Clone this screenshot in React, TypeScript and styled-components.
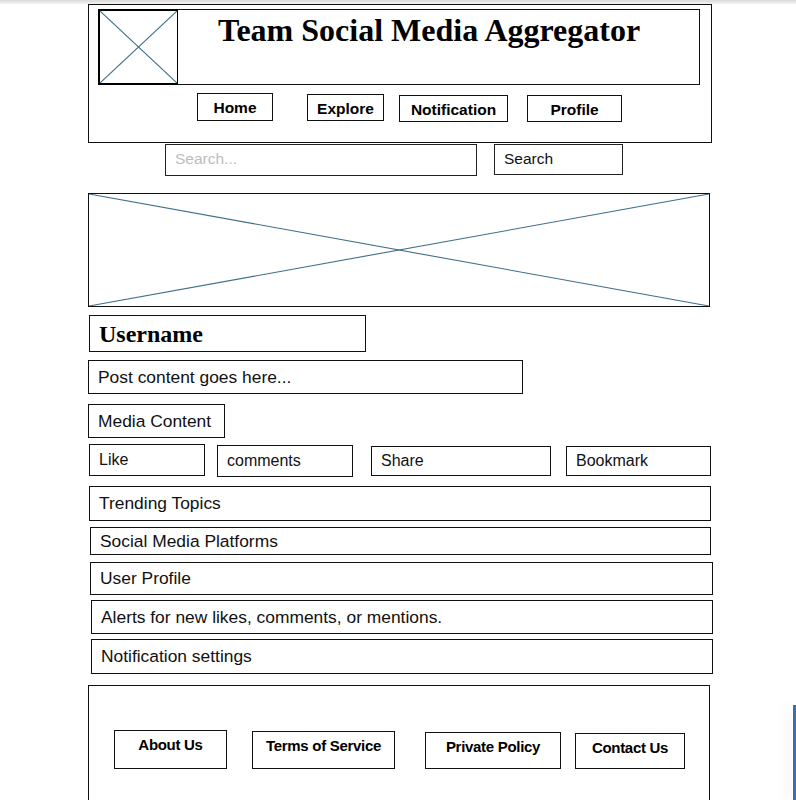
import React from "react";
import styled, { createGlobalStyle } from "styled-components";

const GlobalStyle = createGlobalStyle`
	* {
		box-sizing: border-box;
	}
	body {
		margin: 0;
		background: #fff;
		font-family: "Liberation Sans", Arial, sans-serif;
		color: #111;
	}
`;

const TopShade = styled.div`
	height: 4px;
	background: linear-gradient(#d9d9d9, #f4f4f4);
`;

const Page = styled.div`
	padding-left: 88px;
	width: 796px;
	overflow: hidden;
	height: 796px;
`;

//header
const Header = styled.header`
	width: 624px;
	height: 139px;
	border: 1px solid #111;
	padding: 4px 0 0 9px;
`;
const TitleBox = styled.div`
	display: flex;
	width: 602px;
	height: 76px;
	border: 1px solid #111;
`;
const Placeholder = styled.div`
	flex: 0 0 80px;
	height: 76px;
	margin: -1px 0 -1px -1px;
	border: 2px solid #000;
	border-right-width: 1px;
	background: #fff;
`;
const Title = styled.h1`
	margin: 0;
	padding: 1px 0 0 40px;
	font-family: "Liberation Serif", "Times New Roman", serif;
	font-size: 32px;
	font-weight: bold;
	line-height: 38px;
	color: #000;
`;
const NavRow = styled.nav`
	display: flex;
	align-items: flex-start;
	margin-top: 8px;
`;
const NavButton = styled.div<{ $w: number; $left: number; $top: number; $h: number }>`
	width: ${(p) => p.$w}px;
	height: ${(p) => p.$h}px;
	margin-left: ${(p) => p.$left}px;
	margin-top: ${(p) => p.$top}px;
	border: 1px solid #111;
	display: flex;
	align-items: center;
	justify-content: center;
	padding-top: 2px;
	font-size: 15.5px;
	font-weight: bold;
	color: #000;
`;

//search
const SearchRow = styled.div`
	display: flex;
	align-items: flex-start;
	margin-top: 1px;
`;
const SearchInput = styled.input`
	width: 312px;
	height: 32px;
	margin-left: 77px;
	border: 1px solid #222;
	padding: 0 9px 2px;
	font-family: "Liberation Sans", Arial, sans-serif;
	font-size: 15.5px;
	outline: none;
	&::placeholder {
		color: #bdbdbd;
	}
`;
const SearchButton = styled.div`
	width: 129px;
	height: 31px;
	margin-left: 17px;
	border: 1px solid #222;
	padding: 0 0 2px 9px;
	display: flex;
	align-items: center;
	font-size: 15.5px;
`;

//banner image
const Banner = styled.div`
	width: 622px;
	height: 114px;
	margin-top: 17px;
	border: 1px solid #111;
	svg {
		display: block;
	}
`;

//post
const Box = styled.div<{ $w: number; $h: number; $top: number; $left?: number }>`
	width: ${(p) => p.$w}px;
	height: ${(p) => p.$h}px;
	margin-top: ${(p) => p.$top}px;
	margin-left: ${(p) => p.$left || 0}px;
	border: 1px solid #111;
	padding-left: 9px;
	display: flex;
	align-items: center;
	font-size: 17.4px;
	color: #111;
`;
const UserName = styled(Box)`
	font-family: "Liberation Serif", "Times New Roman", serif;
	font-size: 24px;
	font-weight: bold;
	color: #000;
	padding-top: 2px;
`;
const ActionRow = styled.div`
	display: flex;
	align-items: flex-start;
`;
const ActionBox = styled(Box)`
	font-size: 16px;
`;

//footer
const Footer = styled.footer`
	width: 622px;
	height: 130px;
	margin-top: 11px;
	border: 1px solid #111;
	display: flex;
	align-items: flex-end;
	padding: 0 0 0 25px;
`;
const FooterLinks = styled.div`
	display: flex;
	align-items: flex-end;
	height: 83px;
	margin-bottom: auto;
`;
const FooterButton = styled.div<{ $w: number; $h: number; $left: number }>`
	width: ${(p) => p.$w}px;
	height: ${(p) => p.$h}px;
	margin-left: ${(p) => p.$left}px;
	border: 1px solid #111;
	padding-top: 5px;
	text-align: center;
	font-size: 15px;
	font-weight: bold;
	letter-spacing: -0.3px;
	color: #000;
`;

const EdgePanel = styled.div`
	position: absolute;
	right: 0;
	top: 705px;
	width: 3px;
	height: 95px;
	background: #3b6fa6;
	box-shadow: -6px 0 12px rgba(0, 0, 0, 0.08);
`;

function Cross({ w, h }: { w: number; h: number }) {
	return (
		<svg width={w} height={h} viewBox={`0 0 ${w} ${h}`}>
			<line x1="0" y1="0" x2={w} y2={h} stroke="#3f6f8a" strokeWidth="1.1" />
			<line x1="0" y1={h} x2={w} y2="0" stroke="#3f6f8a" strokeWidth="1.1" />
		</svg>
	);
}

const navItems = [
	{ label: "Home", w: 76, h: 28, left: 99, top: 0 },
	{ label: "Explore", w: 77, h: 27, left: 34, top: 1 },
	{ label: "Notification", w: 109, h: 27, left: 15, top: 2 },
	{ label: "Profile", w: 95, h: 27, left: 19, top: 2 },
];

const actions = [
	{ label: "Like", w: 116, h: 32, left: 1, top: 0 },
	{ label: "comments", w: 136, h: 32, left: 12, top: 1 },
	{ label: "Share", w: 180, h: 30, left: 18, top: 2 },
	{ label: "Bookmark", w: 145, h: 30, left: 15, top: 2 },
];

const sections = [
	{ label: "Trending Topics", w: 622, h: 35, left: 1, top: 9 },
	{ label: "Social Media Platforms", w: 621, h: 28, left: 2, top: 6 },
	{ label: "User Profile", w: 623, h: 33, left: 2, top: 7 },
	{ label: "Alerts for new likes, comments, or mentions.", w: 622, h: 34, left: 3, top: 5 },
	{ label: "Notification settings", w: 622, h: 35, left: 3, top: 5 },
];

const footerLinks = [
	{ label: "About Us", w: 113, h: 39, left: 0 },
	{ label: "Terms of Service", w: 143, h: 38, left: 25 },
	{ label: "Private Policy", w: 136, h: 37, left: 30 },
	{ label: "Contact Us", w: 110, h: 36, left: 14 },
];

function App() {
	return (
		<>
			<GlobalStyle />
			<TopShade />
			<Page>
				<Header>
					<TitleBox>
						<Placeholder>
							<Cross w={77} h={72} />
						</Placeholder>
						<Title>Team Social Media Aggregator</Title>
					</TitleBox>
					<NavRow>
						{navItems.map((n) => (
							<NavButton key={n.label} $w={n.w} $h={n.h} $left={n.left} $top={n.top}>
								{n.label}
							</NavButton>
						))}
					</NavRow>
				</Header>
				<SearchRow>
					<SearchInput placeholder="Search..." />
					<SearchButton>Search</SearchButton>
				</SearchRow>
				<Banner>
					<Cross w={620} h={112} />
				</Banner>
				<UserName $w={277} $h={37} $top={8} $left={1}>
					Username
				</UserName>
				<Box $w={435} $h={34} $top={8}>
					Post content goes here...
				</Box>
				<Box $w={137} $h={34} $top={10}>
					Media Content
				</Box>
				<ActionRow>
					{actions.map((a) => (
						<ActionBox key={a.label} $w={a.w} $h={a.h} $left={a.left} $top={6 + a.top}>
							{a.label}
						</ActionBox>
					))}
				</ActionRow>
				{sections.map((s) => (
					<Box key={s.label} $w={s.w} $h={s.h} $top={s.top} $left={s.left}>
						{s.label}
					</Box>
				))}
				<Footer>
					<FooterLinks>
						{footerLinks.map((f) => (
							<FooterButton key={f.label} $w={f.w} $h={f.h} $left={f.left}>
								{f.label}
							</FooterButton>
						))}
					</FooterLinks>
				</Footer>
			</Page>
			<EdgePanel />
		</>
	);
}

export default App;
